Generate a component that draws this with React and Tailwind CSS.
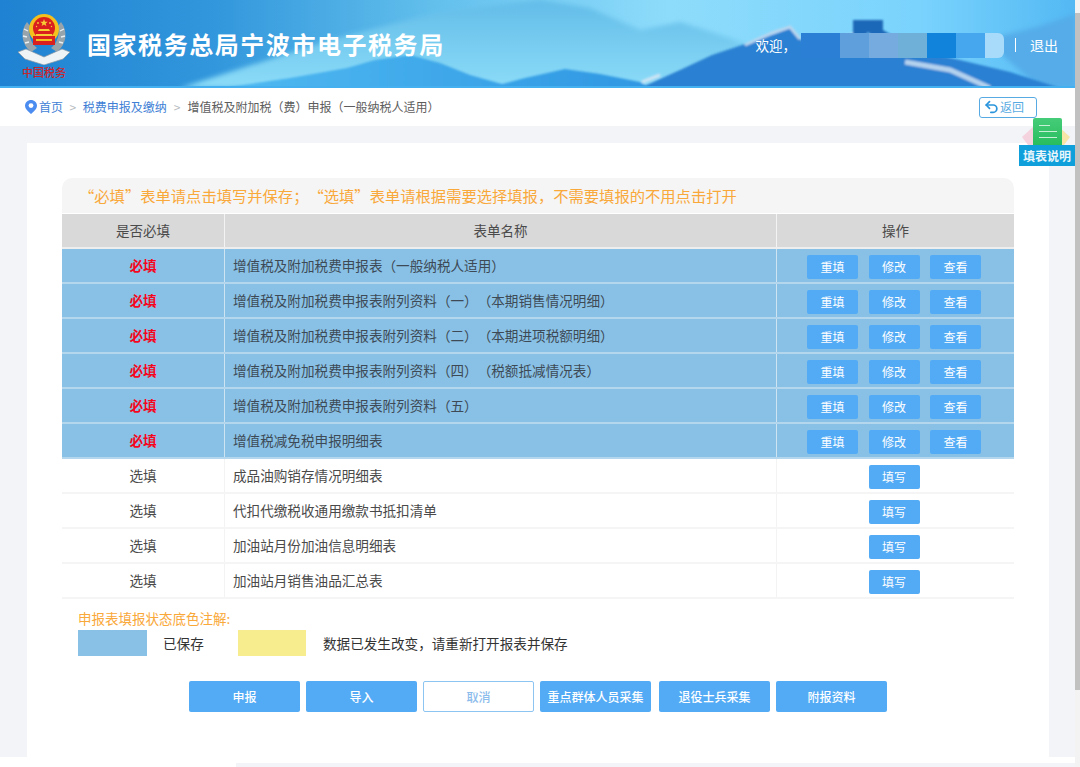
import { Undo2 } from 'lucide-react';

const required = [
  '增值税及附加税费申报表（一般纳税人适用）',
  '增值税及附加税费申报表附列资料（一）（本期销售情况明细）',
  '增值税及附加税费申报表附列资料（二）（本期进项税额明细）',
  '增值税及附加税费申报表附列资料（四）（税额抵减情况表）',
  '增值税及附加税费申报表附列资料（五）',
  '增值税减免税申报明细表',
];

const optional = [
  '成品油购销存情况明细表',
  '代扣代缴税收通用缴款书抵扣清单',
  '加油站月份加油信息明细表',
  '加油站月销售油品汇总表',
];

const mosaic = [
  { w: 'w-[39px]', c: 'bg-[#2b80d6]' },
  { w: 'w-[29px]', c: 'bg-[#5f9fdc]' },
  { w: 'w-[29px]', c: 'bg-[#76abe0]' },
  { w: 'w-[29px]', c: 'bg-[#6eb0d8]' },
  { w: 'w-[29px]', c: 'bg-[#1283da]' },
  { w: 'w-[29px]', c: 'bg-[#46a6ee]' },
  { w: 'w-[19px]', c: 'bg-[#a8dafa] rounded-r-md' },
];

function HeaderArt() {
  return (
    <svg className="absolute inset-0 h-[88px] w-[1080px]" viewBox="0 0 1080 88" preserveAspectRatio="none">
      <defs>
        <linearGradient id="sky" x1="0" y1="0" x2="1" y2="0">
          <stop offset="0" stopColor="#1f82d2" />
          <stop offset="0.2" stopColor="#3297dc" />
          <stop offset="0.4" stopColor="#62bfec" />
          <stop offset="0.62" stopColor="#8edcfb" />
          <stop offset="0.85" stopColor="#7ad3fd" />
          <stop offset="1" stopColor="#52b8f3" />
        </linearGradient>
        <linearGradient id="haze" x1="0" y1="0" x2="0" y2="1">
          <stop offset="0" stopColor="#62bce8" />
          <stop offset="1" stopColor="#8cdcf8" />
        </linearGradient>
        <linearGradient id="hill" x1="0" y1="0" x2="1" y2="0">
          <stop offset="0" stopColor="#4fb9f1" />
          <stop offset="1" stopColor="#2f97e2" />
        </linearGradient>
        <filter id="soft">
          <feGaussianBlur stdDeviation="0.8" />
        </filter>
        <filter id="softer">
          <feGaussianBlur stdDeviation="2.5" />
        </filter>
      </defs>
      <rect width="1080" height="88" fill="url(#sky)" />
      <path d="M180 88 L330 40 L440 12 L540 0 L590 8 L640 30 L680 22 L730 38 L770 55 L700 88 Z" fill="url(#haze)" filter="url(#softer)" />
      <path d="M985 40 L1040 26 L1075 14 V88 H1040 Z" fill="#55ace8" filter="url(#softer)" />
      <g filter="url(#soft)">
        <path d="M230 87 L290 78 L347 68 L375 60 L410 55 L440 63 L470 75 L502 84 L525 78 L565 69 L600 74 L640 82 L650 88 H230 Z" fill="url(#hill)" />
        <path d="M640 88 L680 70 L712 55 L745 44 L775 34 L790 28 L805 44 L830 46 L870 42 L905 48 L960 60 L1010 72 L1060 88 Z" fill="#2a80d2" />
        <path d="M745 45 L772 33 L790 27 L800 39" fill="none" stroke="#b9d6ef" strokeWidth="3" />
        <path d="M826 40 L856 34" fill="none" stroke="#b9d6ef" strokeWidth="3" />
        <path d="M853 20 H883 V30 L900 40 L880 44 L868 32 L860 44 H853 Z" fill="#1f68b8" />
        <path d="M905 62 L950 70 L990 88" fill="none" stroke="#b4d2ee" strokeWidth="5" />
        <path d="M642 82 L660 75" fill="none" stroke="#cfe4f4" strokeWidth="3" />
      </g>
      <rect y="86" width="1080" height="2" fill="#45b0f0" />
    </svg>
  );
}

function Emblem() {
  return (
    <svg className="h-[51px] w-[52px]" viewBox="0 0 52 51">
      <path d="M9 8 C2 17 3 30 13 38 L19 34 C12 28 10 20 12 12 Z" fill="#98a4ab" />
      <path d="M43 8 C50 17 49 30 39 38 L33 34 C40 28 42 20 40 12 Z" fill="#98a4ab" />
      <path d="M6 15 L10 17 M5 22 L9 23 M7 29 L11 28 M46 15 L42 17 M47 22 L43 23 M45 29 L41 28" stroke="#eaf0f3" strokeWidth="1.3" />
      <circle cx="26" cy="15" r="15" fill="#f4c01e" />
      <circle cx="26" cy="14" r="11" fill="#d9201f" />
      <path d="M26 5 L27 7.8 L29.8 7.8 L27.6 9.5 L28.4 12 L26 10.5 L23.6 12 L24.4 9.5 L22.2 7.8 L25 7.8 Z" fill="#f7cf35" />
      <circle cx="20" cy="9" r="0.9" fill="#f7cf35" />
      <circle cx="32" cy="9" r="0.9" fill="#f7cf35" />
      <circle cx="18.5" cy="12.5" r="0.7" fill="#f7cf35" />
      <circle cx="33.5" cy="12.5" r="0.7" fill="#f7cf35" />
      <path d="M21 15 H31 L32 17 H20 Z M18 20 H34 V22 H18 Z" fill="#f7cf35" />
      <path d="M15 22 H37 V31 H15 Z" fill="#d9201f" />
      <path d="M18 25 H34 V27 H18 Z" fill="#f4c01e" />
      <path d="M0 38 L8 35 L26 43 L44 35 L52 38 L45 45 L26 51 L7 45 Z" fill="#eef3f6" stroke="#8e9aa2" strokeWidth="0.7" />
    </svg>
  );
}

function PinIcon() {
  return (
    <svg className="h-[14px] w-[12px]" viewBox="0 0 12 14">
      <path d="M6 0 C2.7 0 0 2.6 0 5.8 C0 9.6 6 14 6 14 C6 14 12 9.6 12 5.8 C12 2.6 9.3 0 6 0 Z" fill="#4b8cf0" />
      <circle cx="6" cy="5.6" r="2.4" fill="#ffffff" />
    </svg>
  );
}

function Btn({ children }) {
  return (
    <button className="flex h-[24px] w-[51px] items-center justify-center rounded-[2px] bg-[#53abf5] text-[12px] text-white">
      {children}
    </button>
  );
}

function Row({ blue, first, name, children }) {
  return (
    <div className={`grid h-[35px] grid-cols-[162px_552px_238px] items-stretch border-b-2 text-[13.6px] ${blue ? 'border-[#b5d7ee] bg-[#89c1e6] text-[#3d4a55]' : 'border-[#f5f5f5] bg-white text-[#4a4a4a]'}`}>
      <div className={`flex items-center justify-center ${blue ? 'font-bold text-[#f5061d]' : ''}`}>{first}</div>
      <div className={`flex items-center border-l pl-[8px] ${blue ? 'border-[#cfe4f3]' : 'border-[#f3f3f3]'}`}>{name}</div>
      <div className={`flex items-center justify-center gap-[10.5px] border-l pr-[3px] pt-[2px] ${blue ? 'border-[#cfe4f3]' : 'border-[#f3f3f3]'}`}>{children}</div>
    </div>
  );
}

function BigBtn({ children, className = '' }) {
  return (
    <button className={`flex h-[31px] w-[111px] items-center justify-center rounded-[2px] bg-[#53abf5] text-[12px] font-medium text-white ${className}`}>
      {children}
    </button>
  );
}

export default function App() {
  return (
    <div className="relative h-[767px] w-[1080px] overflow-hidden bg-[#f2f4f8] font-['Noto_Sans_CJK_SC',sans-serif] [text-spacing-trim:space-all]">
      {/* Header */}
      <header className="relative flex h-[88px] items-center pr-[22px]">
        <HeaderArt />
        <div className="relative flex w-[87px] flex-col items-center pl-[1px] pt-[4px]">
          <Emblem />
          <span className="text-[11px] font-medium leading-[14px] text-[#c9252b]">中国税务</span>
        </div>
        <h1 className="relative text-[24px] font-bold tracking-[1.55px] text-white">国家税务总局宁波市电子税务局</h1>
        <div className="relative ml-auto flex items-center pt-[2px] text-[13.5px] text-white">
          <span className="w-[45px]">欢迎，</span>
          <div className="flex h-[25px]">
            {mosaic.map((m, i) => (
              <div key={i} className={`${m.w} ${m.c}`} />
            ))}
          </div>
          <span className="ml-[11px] mr-[14px] h-[14px] w-[1.5px] bg-white" />
          <span className="text-[14px]">退出</span>
        </div>
      </header>

      {/* Breadcrumb */}
      <nav className="flex h-[38px] items-center bg-white pl-[25px] pr-[43px] text-[12px]">
        <PinIcon />
        <span className="ml-[2px] text-[#3f7fd6]">首页</span>
        <span className="mx-[6.5px] text-[#b8bcc2]">&gt;</span>
        <span className="text-[#3f7fd6]">税费申报及缴纳</span>
        <span className="mx-[7px] text-[#b8bcc2]">&gt;</span>
        <span className="text-[#5d5d5d]">增值税及附加税（费）申报（一般纳税人适用）</span>
        <button className="ml-auto flex h-[21px] w-[58px] items-center rounded-[3px] border border-[#58abe2] pl-[3px] text-[12px] text-[#58abe2]">
          <Undo2 className="h-[16px] w-[17px] text-[#2a95dc]" strokeWidth={2.6} />
          返回
        </button>
      </nav>

      {/* Main card */}
      <main className="pl-[27px] pt-[17px]">
        <div className="h-[614px] w-[1022px] bg-white pl-[35px] pt-[35px]">
          <div className="w-[952px]">
            <div className="flex h-[35px] items-center rounded-t-[10px] bg-[#f5f5f5] pl-[17px] text-[15.3px] text-[#f9a83a]">
              “必填”表单请点击填写并保存；“选填”表单请根据需要选择填报，不需要填报的不用点击打开
            </div>
            <div className="mt-px grid h-[35px] grid-cols-[162px_552px_238px] border-b-2 border-[#eeeeee] bg-[#d9d9d9] text-[13.5px] text-[#4a4a4a]">
              <div className="flex items-center justify-center">是否必填</div>
              <div className="flex items-center justify-center border-l border-[#f3f3f3]">表单名称</div>
              <div className="flex items-center justify-center border-l border-[#f3f3f3]">操作</div>
            </div>
            {required.map((name) => (
              <Row key={name} blue first="必填" name={name}>
                <Btn>重填</Btn>
                <Btn>修改</Btn>
                <Btn>查看</Btn>
              </Row>
            ))}
            {optional.map((name) => (
              <Row key={name} first="选填" name={name}>
                <Btn>填写</Btn>
              </Row>
            ))}
          </div>

          {/* Legend */}
          <div className="ml-[16px] mt-[9px] text-[13.5px] leading-[20px] text-[#f9a83a]">申报表填报状态底色注解:</div>
          <div className="ml-[16px] mt-[2px] flex h-[26px] items-center text-[13.6px] text-[#333333]">
            <div className="h-[26px] w-[69px] bg-[#89c1e6]" />
            <span className="ml-[16px] w-[75px]">已保存</span>
            <div className="h-[26px] w-[68px] bg-[#f7ec8e]" />
            <span className="ml-[17px]">数据已发生改变，请重新打开报表并保存</span>
          </div>

          {/* Actions */}
          <div className="ml-[127px] mt-[25px] flex gap-[6px]">
            <BigBtn>申报</BigBtn>
            <BigBtn>导入</BigBtn>
            <BigBtn className="border border-[#8cc4f2] !bg-white !text-[#8cbcec]">取消</BigBtn>
            <BigBtn>重点群体人员采集</BigBtn>
            <BigBtn className="ml-[2px]">退役士兵采集</BigBtn>
            <BigBtn>附报资料</BigBtn>
          </div>
        </div>
      </main>

      {/* Page bottom edge */}
      <div className="h-[10px] bg-white pl-[236px] pt-[6px]">
        <div className="h-[4px] bg-[#f2f4f8]" />
      </div>

      {/* Floating help tab */}
      <div className="absolute left-[1019px] top-[118px] flex w-[56px] flex-col items-center">
        <svg className="absolute left-[3px] top-[8px] h-[19px] w-[48px]" viewBox="0 0 48 19">
          <path d="M12 0 L0 11 L6 19 H12 Z" fill="#f5d3de" />
          <path d="M36 0 L48 11 L42 19 H36 Z" fill="#f8e5a8" />
        </svg>
        <div className="relative h-[27px] w-[29px] rounded-t-[2px] bg-gradient-to-b from-[#45cc78] to-[#27bd5e]">
          <span className="absolute left-[6px] top-[7px] h-px w-[11px] bg-[#c8f0d6]" />
          <span className="absolute left-[6px] top-[13px] h-px w-[18px] bg-[#c8f0d6]" />
          <span className="absolute left-[6px] top-[19px] h-px w-[18px] bg-[#c8f0d6]" />
        </div>
        <div className="relative flex h-[21px] w-[56px] items-center justify-center bg-[#0f9fdb] text-[12px] font-bold text-[#e8f6fc]">填表说明</div>
      </div>

      {/* Scrollbar */}
      <div className="absolute right-0 top-0 h-full w-[5px] bg-[#f3f3f3]">
        <div className="mt-[13px] h-[677px] bg-[#c1c1c1]" />
      </div>
    </div>
  );
}
